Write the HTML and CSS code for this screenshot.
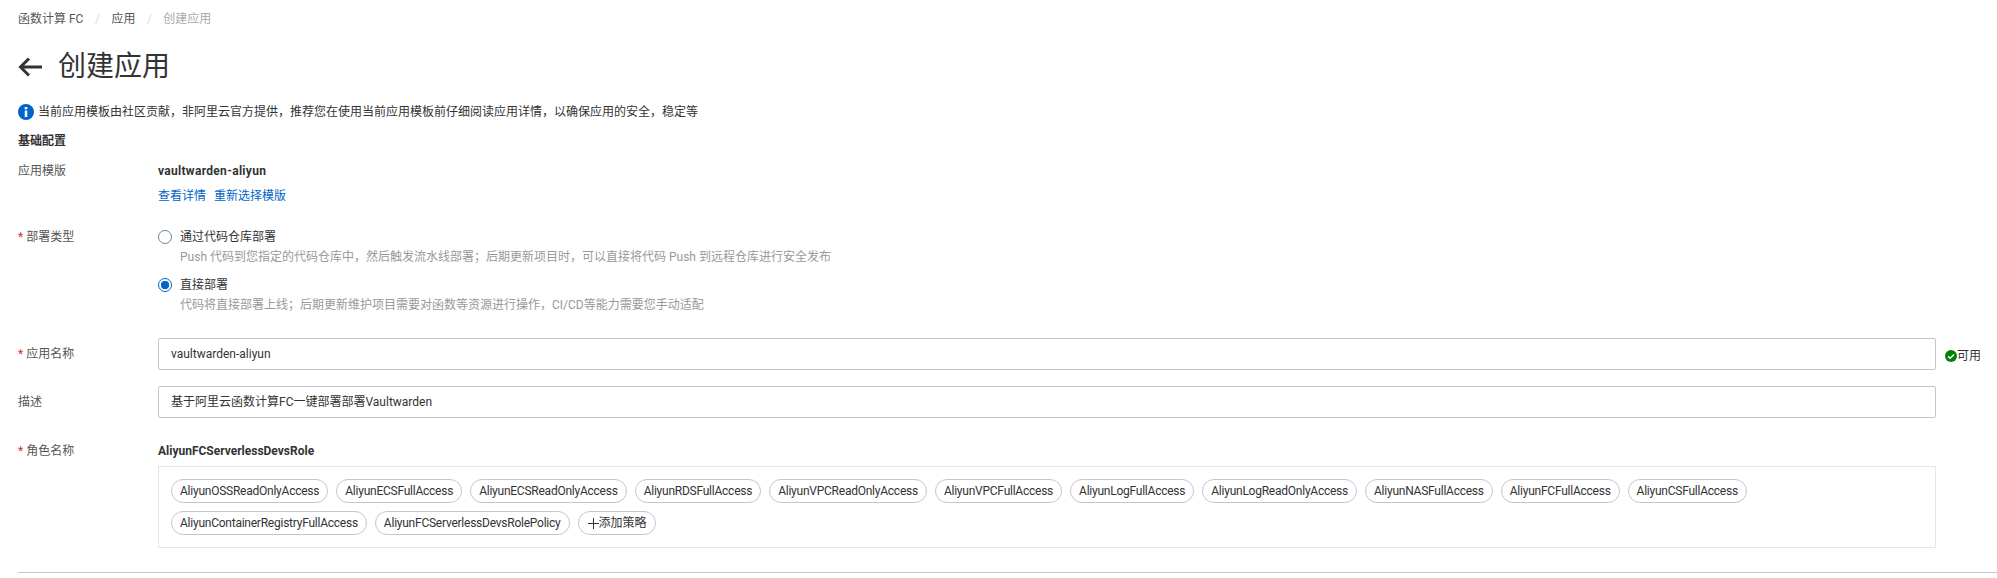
FILE: index.html
```html
<!DOCTYPE html>
<html lang="zh-CN">
<head>
    <meta charset="UTF-8">
    <title>创建应用</title>
    <link rel="stylesheet" href="styles.css">
</head>
<body>
    <div class="breadcrumb">
        <span>函数计算 FC</span><i>/</i><span>应用</span><i>/</i><span class="current">创建应用</span>
    </div>

    <div class="title">
        <svg class="back" width="24" height="20" viewBox="0 0 24 20"><path d="M24 10H2.5M11 1.5L2.5 10l8.5 8.5" fill="none" stroke="#333" stroke-width="3"/></svg>
        <h1>创建应用</h1>
    </div>

    <div class="notice">
        <svg width="16" height="16" viewBox="0 0 16 16"><circle cx="8" cy="8" r="8" fill="#0064c8"/><rect x="6.7" y="3" width="2.6" height="2.4" fill="#fff"/><rect x="6.7" y="6.6" width="2.6" height="6.4" fill="#fff"/></svg>
        <span>当前应用模板由社区贡献，非阿里云官方提供，推荐您在使用当前应用模板前仔细阅读应用详情，以确保应用的安全，稳定等</span>
    </div>

    <h2 class="section">基础配置</h2>

    <div class="row row-template">
        <label class="label">应用模版</label>
        <div class="field">
            <div class="strong app-name">vaultwarden-aliyun</div>
            <div class="links"><a>查看详情</a><a>重新选择模版</a></div>
        </div>
    </div>

    <div class="row row-type">
        <label class="label"><em>*</em>部署类型</label>
        <div class="field">
            <div class="radio">
                <span class="dot"></span>
                <div>
                    <div class="radio-name">通过代码仓库部署</div>
                    <div class="hint">Push 代码到您指定的代码仓库中，然后触发流水线部署；后期更新项目时，可以直接将代码 Push 到远程仓库进行安全发布</div>
                </div>
            </div>
            <div class="radio">
                <span class="dot on"></span>
                <div>
                    <div class="radio-name">直接部署</div>
                    <div class="hint">代码将直接部署上线；后期更新维护项目需要对函数等资源进行操作，CI/CD等能力需要您手动适配</div>
                </div>
            </div>
        </div>
    </div>

    <div class="row row-input">
        <label class="label"><em>*</em>应用名称</label>
        <div class="input">vaultwarden-aliyun</div>
        <div class="status">
            <svg width="12" height="12" viewBox="0 0 12 12"><circle cx="6" cy="6" r="6" fill="#008000"/><path d="M3 6.2l2.1 2 3.9-3.7" fill="none" stroke="#fff" stroke-width="1.5"/></svg>可用
        </div>
    </div>

    <div class="row row-input">
        <label class="label">描述</label>
        <div class="input">基于阿里云函数计算FC一键部署部署Vaultwarden</div>
    </div>

    <div class="row row-role">
        <label class="label"><em>*</em>角色名称</label>
        <div class="field">
            <div class="strong">AliyunFCServerlessDevsRole</div>
            <div class="tags">
                <span class="tag">AliyunOSSReadOnlyAccess</span>
                <span class="tag">AliyunECSFullAccess</span>
                <span class="tag">AliyunECSReadOnlyAccess</span>
                <span class="tag">AliyunRDSFullAccess</span>
                <span class="tag">AliyunVPCReadOnlyAccess</span>
                <span class="tag">AliyunVPCFullAccess</span>
                <span class="tag">AliyunLogFullAccess</span>
                <span class="tag">AliyunLogReadOnlyAccess</span>
                <span class="tag">AliyunNASFullAccess</span>
                <span class="tag">AliyunFCFullAccess</span>
                <span class="tag">AliyunCSFullAccess</span>
                <span class="tag">AliyunContainerRegistryFullAccess</span>
                <span class="tag">AliyunFCServerlessDevsRolePolicy</span>
                <span class="tag add">
                    <svg width="11" height="11" viewBox="0 0 11 11"><path d="M5.5 0v11M0 5.5h11" fill="none" stroke="#333"/></svg>添加策略
                </span>
            </div>
        </div>
    </div>

    <hr class="line">
</body>
</html>
```

FILE: styles.css
```css
html, body {
    height: 578px;
    overflow: hidden;
}
body {
    margin: 0;
    padding: 0 0 0 18px;
    background-color: #fff;
    color: #333;
    font-family: Roboto, "Noto Sans CJK SC", sans-serif;
    font-size: 12px;
    line-height: 16px;
}
.breadcrumb {
    display: flex;
    padding-top: 11px;
    color: #555;
}
.breadcrumb i {
    margin: 0 11.5px;
    font-style: normal;
    color: #d8dade;
}
.breadcrumb .current {
    color: #aaa;
}
.title {
    display: flex;
    align-items: center;
    margin-top: 20px;
    height: 40px;
}
.back {
    margin-right: 16px;
}
h1 {
    margin: 0;
    font-size: 28px;
    font-weight: 400;
    line-height: 40px;
}
.notice {
    display: flex;
    align-items: center;
    gap: 4px;
    margin-top: 17px;
}
.section {
    margin: 13px 0 0;
    font-size: 12px;
    font-weight: 700;
    line-height: 16px;
}
.row {
    display: flex;
}
.label {
    flex: 0 0 140px;
    color: #555;
}
.label em {
    margin-right: 3px;
    font-style: normal;
    color: #d93026;
}
.row-template {
    margin-top: 14px;
}
.strong {
    font-weight: 700;
}
.app-name {
    letter-spacing: 0.3px;
}
.links {
    display: flex;
    gap: 8px;
    margin-top: 9px;
    color: #0064c8;
}
.row-type {
    margin-top: 25px;
}
.radio {
    display: flex;
    gap: 8px;
    margin-bottom: 12px;
}
.dot {
    box-sizing: border-box;
    width: 14px;
    height: 14px;
    margin-top: 1px;
    border: 1px solid #6b83a0;
    border-radius: 50%;
}
.dot.on {
    border: 1.5px solid #0064c8;
    background: radial-gradient(circle, #0064c8 0 4px, #fff 4.5px);
}
.hint {
    margin-top: 4px;
    color: #999;
}
.row-input {
    align-items: center;
    height: 32px;
    margin-bottom: 16px;
}
.row-type + .row-input {
    margin-top: 13px;
}
.input {
    box-sizing: border-box;
    flex: 0 0 1778px;
    height: 32px;
    padding: 0 12px;
    border: 1px solid #c1c6cf;
    border-radius: 2px;
    line-height: 31px;
}
.status {
    display: flex;
    align-items: center;
    margin: 3px 0 0 9px;
}
.row-role {
    margin-top: 25px;
}
.tags {
    box-sizing: border-box;
    display: flex;
    flex-wrap: wrap;
    align-content: flex-start;
    gap: 8px;
    width: 1778px;
    height: 82px;
    margin-top: 7px;
    padding: 12px;
    border: 1px solid #e3e5e8;
}
.tag {
    box-sizing: border-box;
    height: 24px;
    padding: 0 8px;
    border: 1px solid #c1c6cf;
    border-radius: 12px;
    letter-spacing: -0.24px;
    line-height: 22px;
}
.add {
    display: flex;
    align-items: center;
    padding-left: 9px;
    letter-spacing: 0;
}
.line {
    margin: 24px 0 0;
    border: 0;
    border-top: 1px solid #c1c6cf;
}
```
